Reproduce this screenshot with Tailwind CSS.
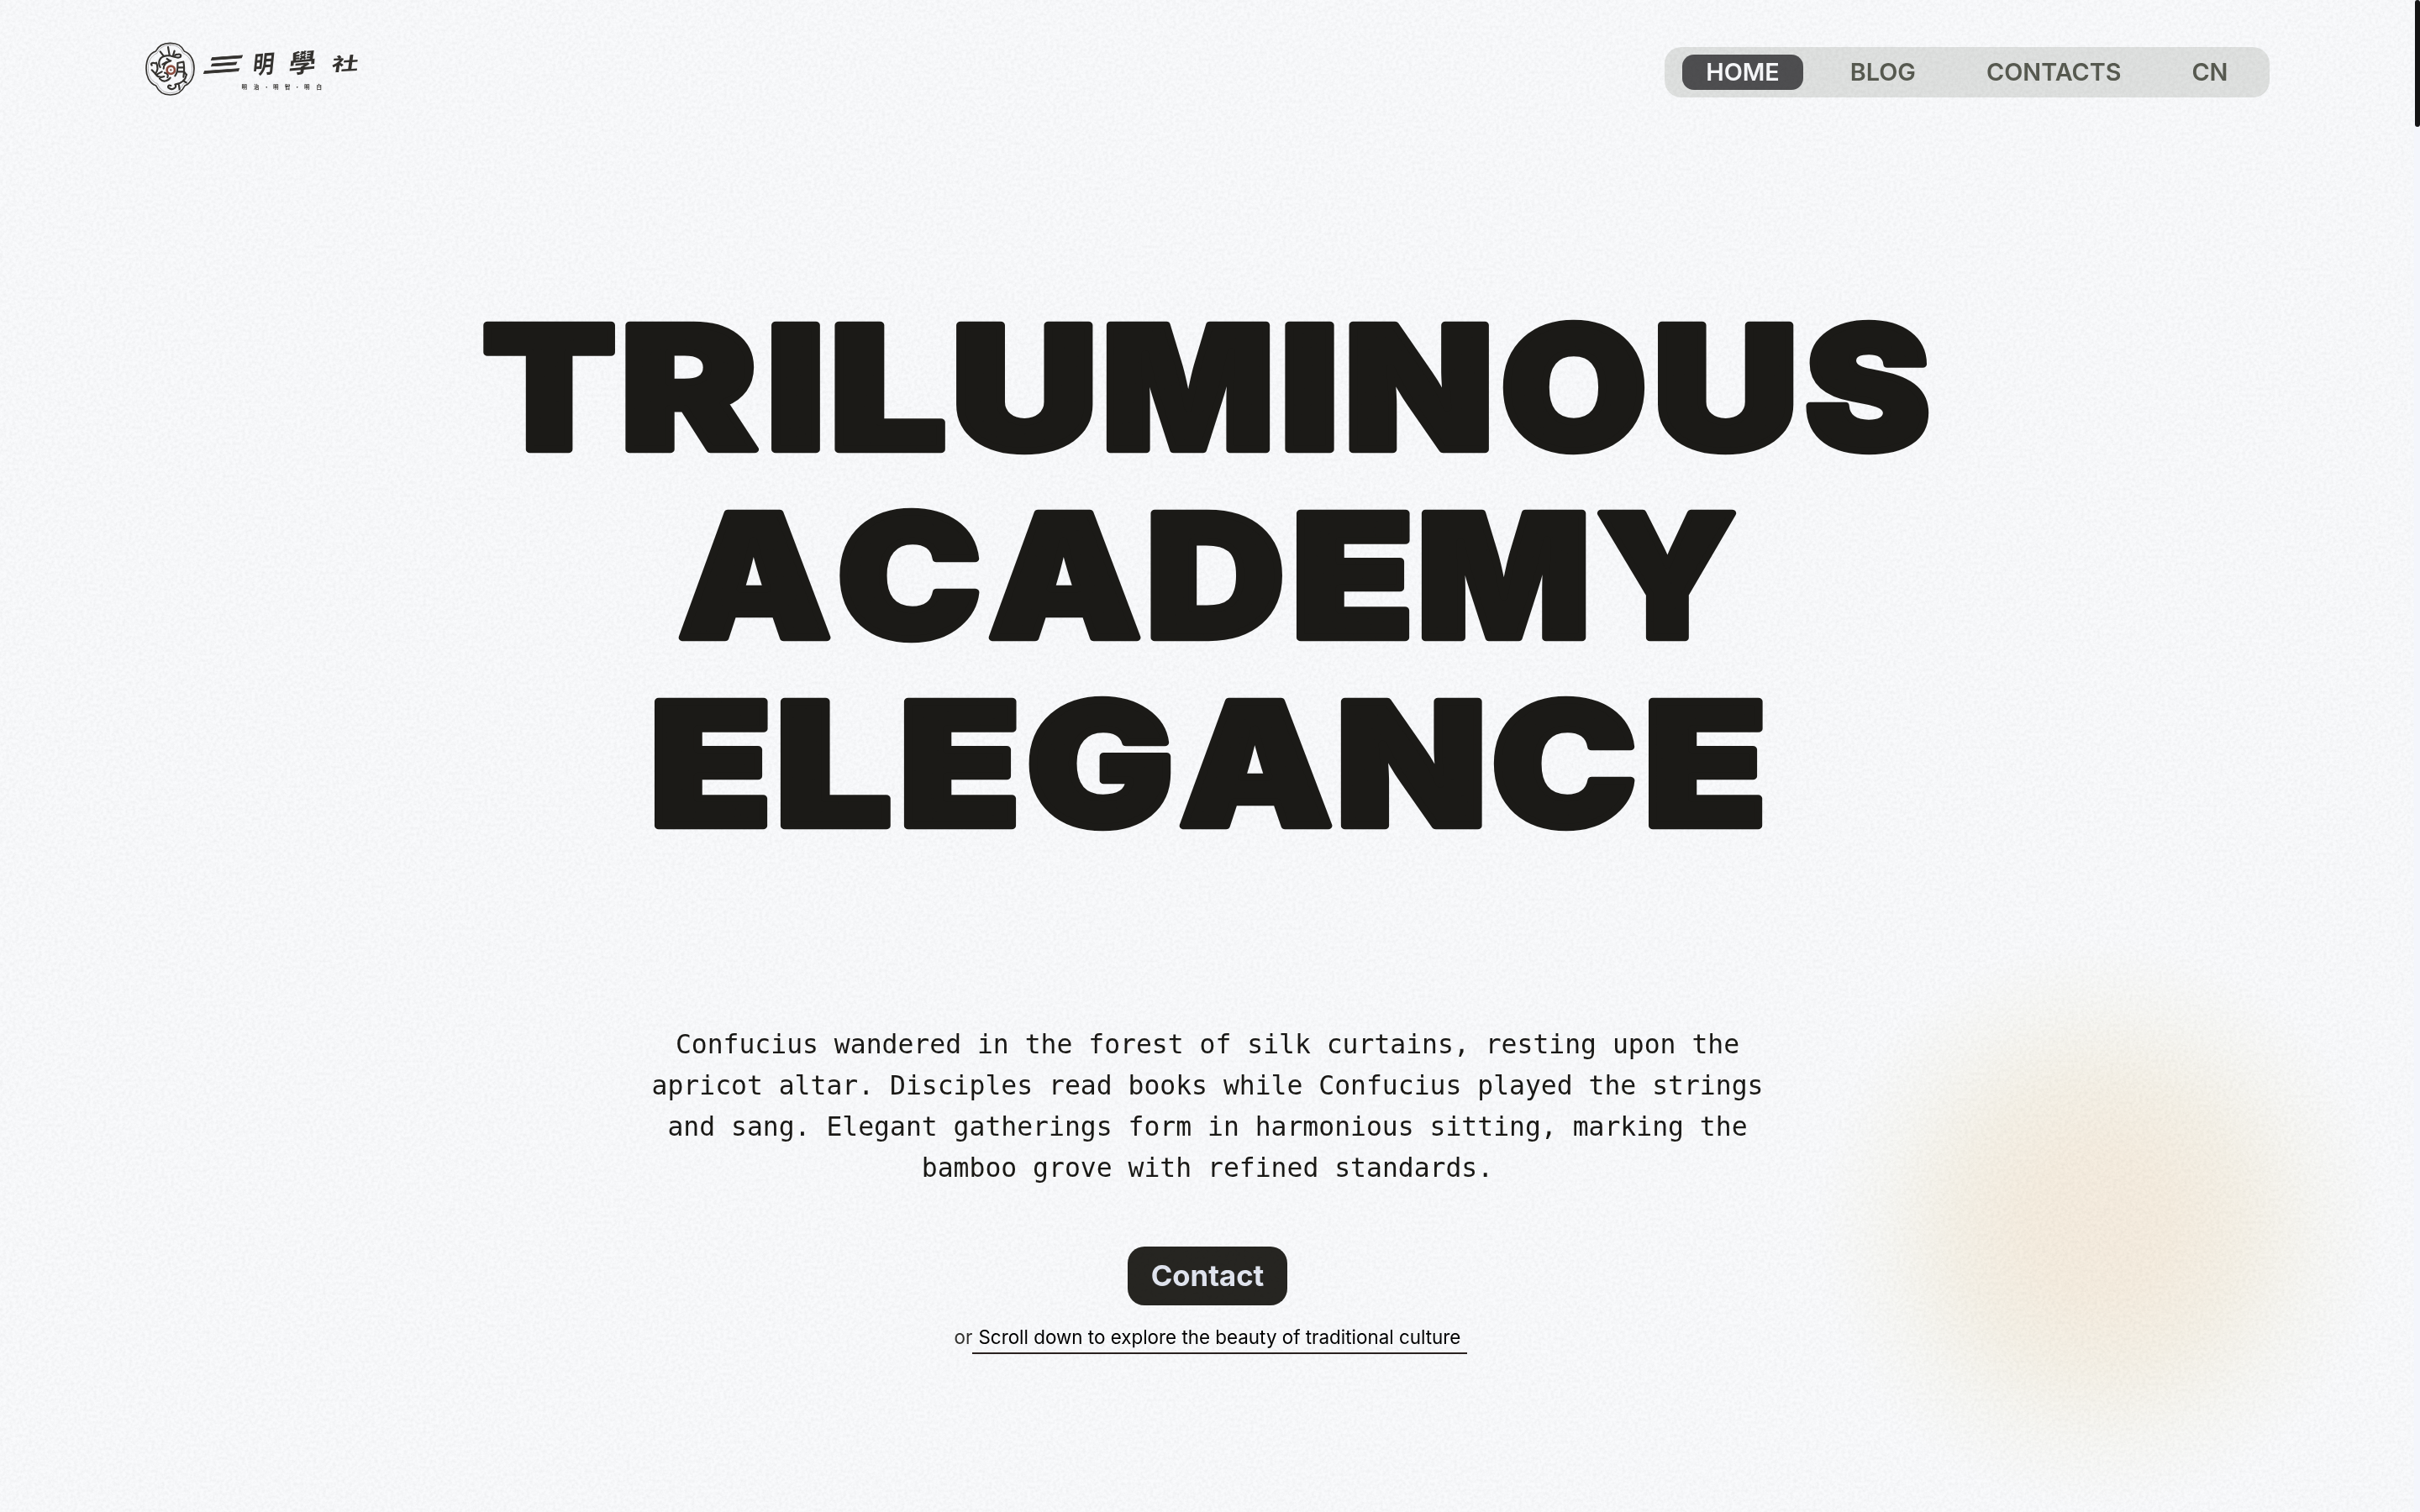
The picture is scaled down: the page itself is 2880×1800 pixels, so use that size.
<!DOCTYPE html>
<html lang="en">
<head>
<meta charset="utf-8">
<title>Triluminous Academy</title>
<script src="https://cdn.jsdelivr.net/npm/@tailwindcss/browser@4"></script>
</head>
<body class="relative h-[1800px] w-[2880px] overflow-hidden bg-[#f9fafc] font-['Inter',sans-serif] text-[#1a1916]">

  <!-- soft glow -->
  <div class="absolute left-[2158px] top-[1118px] h-[680px] w-[680px] rounded-full bg-[radial-gradient(closest-side,#f5ecdf_0%,#f5ede0_25%,#f5f1e7_50%,#f7f7f4_76%,#f9fafc_100%)]"></div>

  <div class="relative flex h-full flex-col items-center">
    <header class="flex h-[172px] w-full items-start justify-between pl-[168px] pr-[179.5px]">
      <svg class="mt-[46px] h-[72px] w-[262px]" viewBox="0 0 262 72" role="img" aria-label="三明學社">
        <g transform="scale(.33333)" fill="none" stroke="#34322f" stroke-width="6.500" stroke-linecap="round" stroke-linejoin="round">
          <path stroke-width="5" d="M104 16C130 16 144 24 154 45C178 54 189 80 189 107C189 134 178 159 156 168C146 189 128 201 104 201C80 201 62 189 53 168C28 159 18 132 18 107C18 80 28 54 52 45C62 24 78 16 104 16Z"/>
          <path stroke-width="1.500" stroke="#77757a" d="M104 23C126 23 141 32 149 52C172 61 182 83 182 107C182 131 172 152 151 161C141 183 124 194 104 194C84 194 67 183 58 161C34 152 25 130 25 107C25 84 34 61 57 52C65 32 82 23 104 23Z"/>
          <path d="M68 102C58 84 66 63 90 61C110 59 118 68 132 68C145 67 144 54 133 56C126 56 122 58 121 60M96 30L101 58M68 46L80 62M119 44L114 60M76 92L90 84M80 107C80 92 92 82 106 79M92 72L104 80M50 88C38 84 33 90 38 95M54 86C63 104 58 116 50 126M38 112L52 127C60 139 70 140 82 135M56 128L74 118M84 122C94 124 98 130 94 138M66 143C78 157 94 153 104 140M130 88C131 108 130 122 121 133M130 87L151 83C155 104 154 118 151 137M131 103H150M128 118H150M106 168C97 164 92 173 100 177C114 186 130 172 121 164C141 161 158 150 162 128M134 160L137 181M162 130L155 120M150 150L161 157"/>
          <circle cx="106" cy="112" r="14" stroke="#8c4b3e" stroke-width="8"/>
          <circle cx="106" cy="112" r="3.500" fill="#6b3a30" stroke="none"/>
        </g>
        <g class="font-['Noto_Sans_CJK_TC',sans-serif] font-bold" fill="#34322f">
          <text transform="matrix(.97 -.07 -.2 .5 72 41)" font-size="48" stroke="#34322f" stroke-width="1.500">三</text>
          <text transform="matrix(.85 -.06 -.1 .98 132 42)" font-size="30">明</text>
          <text transform="matrix(1.04 -.1 -.08 .98 175 41.5)" font-size="31">學</text>
          <text transform="matrix(1.1 -.06 -.1 .74 226 38.500)" font-size="29">社</text>
          <text y="60" x="119.500 134 146 157 171 182.500 194 208.500" font-size="6.500">明治·明智·明白</text>
        </g>
      </svg>
      <nav class="mt-[56px] flex h-[60px] items-center gap-[28px] rounded-[20px] bg-[#dfe1e0] px-[21px] text-[28.8px] font-semibold leading-[42px] text-[#575a50]">
        <a class="h-[42px] rounded-[14px] bg-[#4e4e50] px-[28px] text-[#f8f9fb]">HOME</a>
        <a class="px-[28px]">BLOG</a>
        <a class="px-[28px]">CONTACTS</a>
        <a class="px-[28px]">CN</a>
      </nav>
    </header>

    <h1 class="mt-[176px] h-[672px] w-[1760px]">
      <svg id="title" class="block h-[672px] w-[1760px] overflow-visible font-['Inter',sans-serif] font-black" viewBox="560 348 1760 672" font-size="204" fill="#1b1a17" stroke="#1b1a17" stroke-width="8.500" stroke-linejoin="round"></svg>
    </h1>

    <p class="mt-[199px] text-center font-['DejaVu_Sans_Mono',monospace] text-[31.4px] leading-[49px] -translate-x-[3px]">Confucius wandered in the forest of silk curtains, resting upon the<br>apricot altar. Disciples read books while Confucius played the strings<br>and sang. Elegant gatherings form in harmonious sitting, marking the<br>bamboo grove with refined standards.</p>

    <a class="mt-[69px] flex h-[70px] w-[190px] items-center justify-center rounded-[20px] bg-[#262521] pb-[2px] text-[34.7px] font-bold text-[#e2e6f0] -translate-x-[3px]">Contact</a>

    <div class="mt-[20px] flex text-[22.4px] leading-[36px] translate-x-[1px]">
      <span class="text-[#33322f]">or</span>
      <a class="border-b-2 border-[#2a2220] pl-[7px] pr-[8px] text-black">Scroll down to explore the beauty of traditional culture</a>
    </div>
  </div>

  <!-- paper grain -->
  <svg class="pointer-events-none absolute left-0 top-0 h-full w-[2873px] mix-blend-multiply" aria-hidden="true">
    <filter id="grain" x="0" y="0" width="100%" height="100%">
      <feTurbulence type="fractalNoise" baseFrequency=".26" numOctaves="3" stitchTiles="stitch"/>
      <feColorMatrix values="0 0 0 0 .5  0 0 0 0 .5  0 0 0 0 .5  .26 0 0 0 -.084"/>
    </filter>
    <rect width="100%" height="100%" filter="url(#grain)"/>
  </svg>

  <!-- scrollbar -->
  <div class="absolute right-0 top-0 h-full w-[7px] bg-[#f4f6fc] pl-px">
    <div class="h-[151px] rounded-[3px] bg-[#141414]"></div>
  </div>

<script>
// ink edges of every letter at 1em: left, right, advance
const ink = {T:[.024,.662,.687],R:[.049,.654,.668],I:[.047,.245,.291],L:[.049,.542,.565],U:[.047,.678,.722],M:[.047,.912,.956],N:[.047,.724,.77],O:[.031,.745,.775],S:[.026,.641,.666],A:[.020,.775,.795],C:[.031,.719,.748],D:[.047,.693,.723],E:[.047,.573,.613],Y:[.014,.761,.775],G:[.031,.716,.754]};
const size = 204, stroke = 8.5;
// each line: baseline, text, [left, right] of each letter
const lines = [
  [535, 'TRILUMINOUS', [[574.5,732.5],[745,903],[918,976],[994,1126],[1138,1301],[1317,1512],[1529.5,1588],[1605.5,1772],[1788,1958],[1973,2135],[2149,2296]]],
  [759, 'ACADEMY', [[807,989],[998.5,1166],[1176,1358],[1369.5,1527],[1543,1678],[1692,1888],[1899,2068]]],
  [983, 'ELEGANCE', [[779,914],[929.5,1061],[1076,1210],[1224,1393],[1403,1586],[1596,1764],[1777,1946],[1962,2098]]]
];
const ns = 'http://www.w3.org/2000/svg', svg = document.getElementById('title');
for (const [y, word, boxes] of lines) {
  const text = document.createElementNS(ns, 'text');
  text.setAttribute('y', y);
  [...word].forEach((ch, i) => {
    const [l, r, adv] = ink[ch], [left, right] = boxes[i];
    const k = (right - left) / ((r - l) * size + stroke);
    const t = document.createElementNS(ns, 'tspan');
    t.textContent = ch;
    t.setAttribute('x', left - k * (l * size - stroke / 2));
    t.setAttribute('textLength', adv * size * k);
    t.setAttribute('lengthAdjust', 'spacingAndGlyphs');
    text.append(t);
  });
  svg.append(text);
}
</script>
</body>
</html>
